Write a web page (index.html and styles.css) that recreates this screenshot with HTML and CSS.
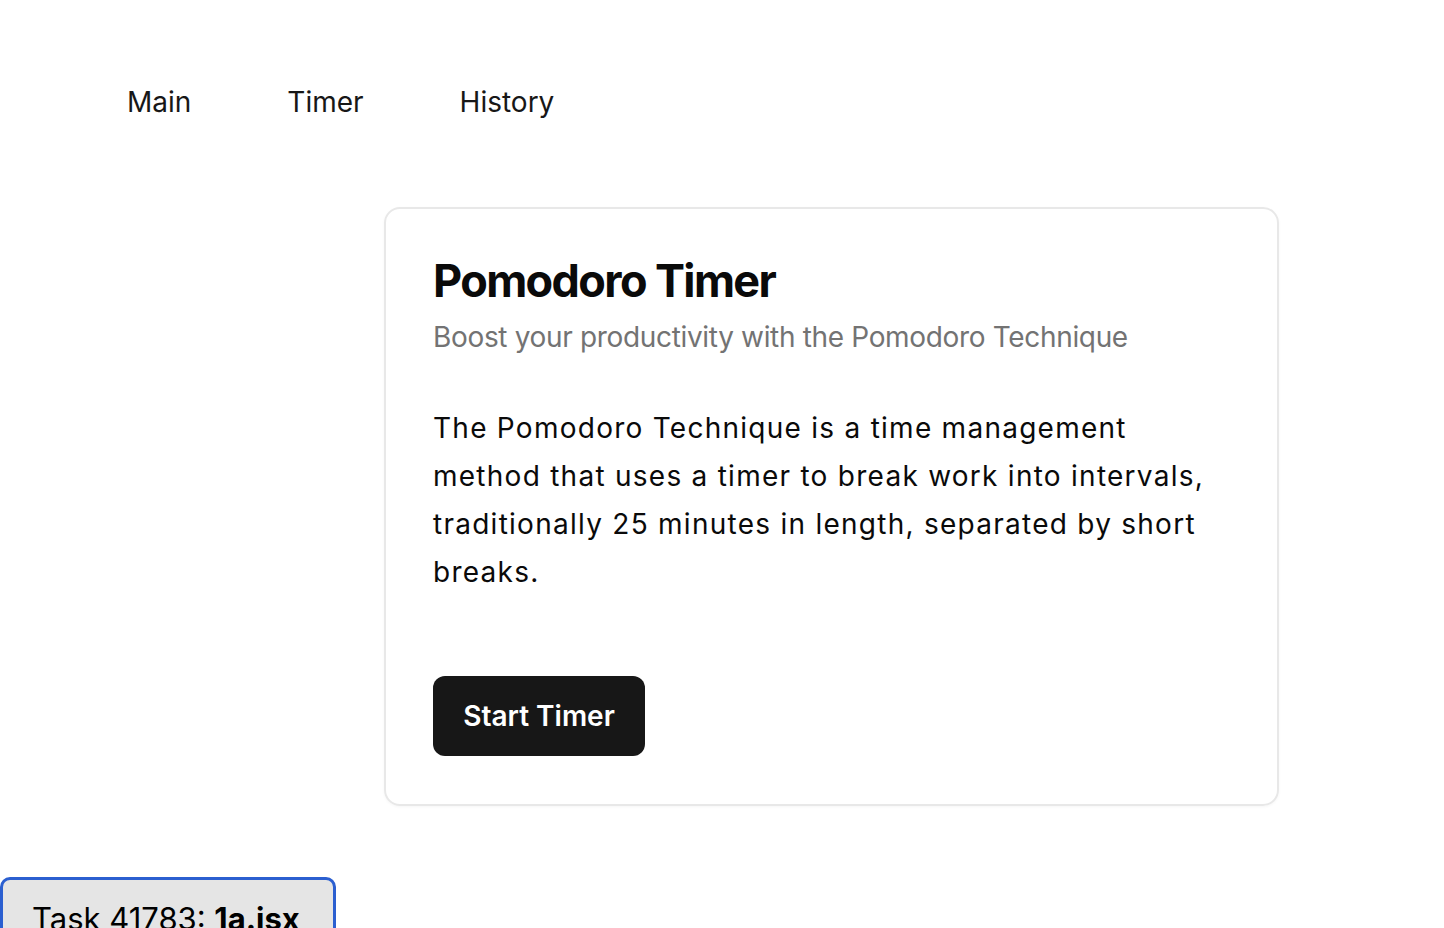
FILE: index.html
```html
<!DOCTYPE html>
<html lang="en">
<head>
<meta charset="utf-8">
<title>Pomodoro Timer</title>
<link rel="stylesheet" href="styles.css">
</head>
<body>
<nav class="nav">
  <a class="nav-link" href="#">Main</a>
  <a class="nav-link" href="#">Timer</a>
  <a class="nav-link" href="#">History</a>
</nav>
<main class="main">
  <section class="card">
    <h1 class="title">Pomodoro Timer</h1>
    <p class="subtitle">Boost your productivity with the Pomodoro Technique</p>
    <p class="text">The Pomodoro Technique is a time management method that uses a timer to break work into intervals, traditionally 25 minutes in length, separated by short breaks.</p>
    <button class="btn">Start Timer</button>
  </section>
</main>
<div class="task-tab">Task 41783: <b>1a.jsx</b></div>
</body>
</html>
```

FILE: styles.css
```css
* { box-sizing: border-box; }
html, body { margin: 0; padding: 0; background: #fff; }
body {
  font-family: Inter, "Noto Sans", sans-serif;
  color: #0a0a0a;
  height: 928px;
  overflow: hidden;
}
.nav {
  display: flex;
  gap: 96px;
  padding: 82px 0 0 127px;
  height: 207px;
}
.nav-link {
  font-size: 28px;
  line-height: 40px;
  color: #171717;
  text-decoration: none;
  height: 40px;
}
.main {
  padding-left: 384px;
}
.card {
  width: 895px;
  border: 2px solid #e8e8e8;
  border-radius: 16px;
  padding: 48px 47px 48px;
  box-shadow: 0 1px 3px rgba(0,0,0,0.04);
}
.title {
  margin: 0;
  font-size: 45px;
  line-height: 48px;
  font-weight: 700;
  letter-spacing: -0.036em;
  color: #0a0a0a;
}
.subtitle {
  margin: 12px 0 0;
  font-size: 28px;
  line-height: 40px;
  letter-spacing: -0.012em;
  color: #737373;
}
.text {
  margin: 47px 0 0;
  font-size: 28px;
  line-height: 48px;
  letter-spacing: 0.045em;
  color: #0a0a0a;
}
.btn {
  margin-top: 80px;
  display: block;
  width: 212px;
  height: 80px;
  border: 0;
  border-radius: 12px;
  background: #171717;
  color: #fff;
  font-family: inherit;
  font-size: 28px;
  font-weight: 600;
}
.task-tab {
  position: fixed;
  left: 0;
  top: 877px;
  width: 336px;
  height: 80px;
  background: #e5e5e5;
  border: 3px solid #2b5fd0;
  border-radius: 10px;
  padding: 19px 0 0 29px;
  font-size: 31px;
  line-height: 40px;
  color: #000;
}
.task-tab b { font-weight: 700; }
```
